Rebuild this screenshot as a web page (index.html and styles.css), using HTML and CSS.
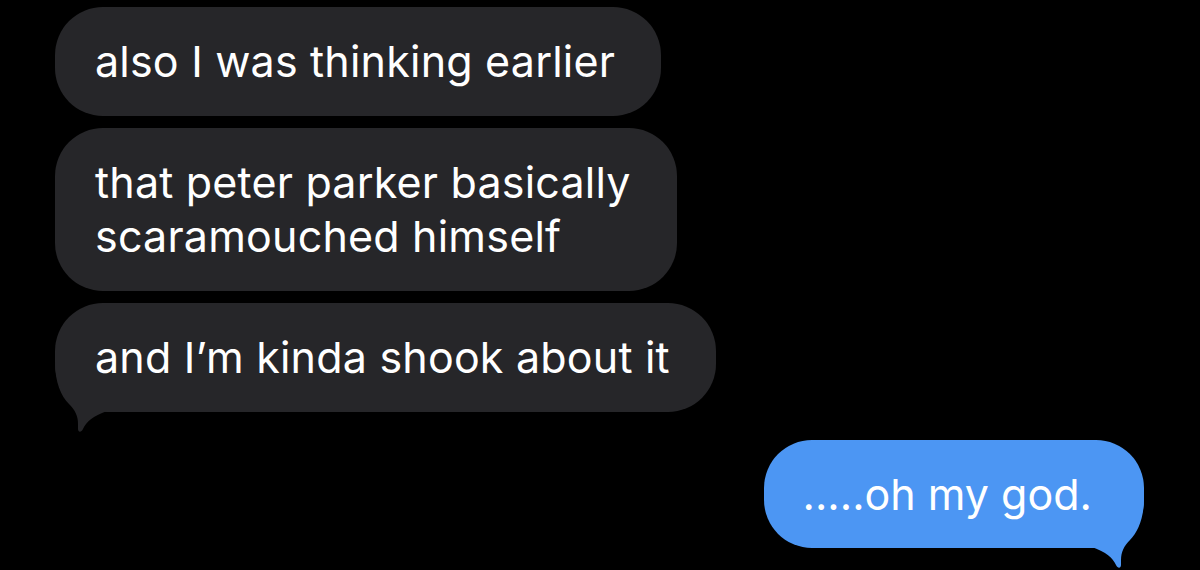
FILE: index.html
```html
<!DOCTYPE html>
<html lang="en">
<head>
    <meta charset="UTF-8">
    <meta name="viewport" content="width=device-width, initial-scale=1.0">
    <title>Messages</title>
    <link rel="stylesheet" href="styles.css">
</head>
<body>

    <div class="thread">
        <div class="msg msg-in">also I was thinking earlier</div>
        <div class="msg msg-in">that peter parker basically<br>scaramouched himself</div>
        <div class="msg msg-in">
            and I’m kinda shook about it
            <svg class="tail tail-left" width="56" height="72" viewBox="0 0 56 72">
                <path d="M0 0 C0 20 6 34 14 42 C20 48 23 54 23 62 L23 67 C23 70 26 71 28 67 C31 60 38 54 52 49 L52 0 Z"/>
            </svg>
        </div>
        <div class="msg msg-out">
            .....oh my god.
            <svg class="tail tail-right" width="56" height="72" viewBox="0 0 56 72">
                <path d="M56 0 C56 20 50 34 42 42 C36 48 33 54 33 62 L33 67 C33 70 30 71 28 67 C25 60 18 54 4 49 L4 0 Z"/>
            </svg>
        </div>
    </div>

</body>
</html>
```

FILE: styles.css
```css
html, body {
    margin: 0;
    background-color: #000;
}

body {
    min-height: 100vh;
    font-family: "Inter", "Liberation Sans", sans-serif;
    font-size: 43px;
    color: #fff;
}

.thread {
    display: flex;
    flex-direction: column;
    gap: 12px;
    padding: 7px 56px 30px 55px;
}

.msg {
    position: relative;
    z-index: 0;
    align-self: flex-start;
    padding: 27px 46px 28px 40px;
    line-height: 54px;
    letter-spacing: 0.2px;
    border-radius: 48px;
    background-color: #262629;
}

.msg-out {
    align-self: flex-end;
    margin-top: 16px;
    padding: 27px 52px 27px 39px;
    letter-spacing: 0;
    background-color: #4c96f3;
}

.tail {
    position: absolute;
    z-index: -1;
    bottom: -22px;
    fill: #262629;
}

.tail-left {
    left: 0;
}

.tail-right {
    right: 0;
    fill: #4c96f3;
}
```
